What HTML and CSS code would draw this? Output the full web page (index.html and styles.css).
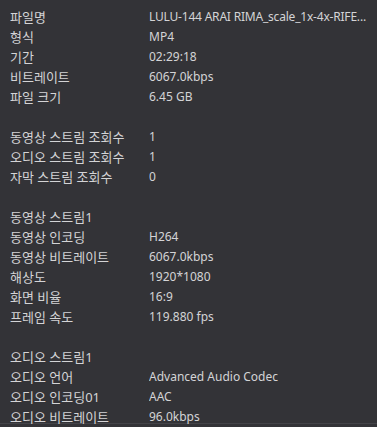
FILE: index.html
```html
<!DOCTYPE html>
<html lang="ko">
<head>
<meta charset="utf-8">
<link rel="stylesheet" href="styles.css">
</head>
<body>
<div class="panel">
  <dl class="info">
    <div class="row"><dt>파일명</dt><dd class="long">LULU-144 ARAI RIMA_scale_1x-4x-RIFE...</dd></div>
    <div class="row"><dt>형식</dt><dd>MP4</dd></div>
    <div class="row"><dt>기간</dt><dd>02:29:18</dd></div>
    <div class="row"><dt>비트레이트</dt><dd>6067.0kbps</dd></div>
    <div class="row"><dt>파일 크기</dt><dd>6.45 GB</dd></div>
    <div class="gap"></div>
    <div class="row"><dt>동영상 스트림 조회수</dt><dd>1</dd></div>
    <div class="row"><dt>오디오 스트림 조회수</dt><dd>1</dd></div>
    <div class="row"><dt>자막 스트림 조회수</dt><dd>0</dd></div>
    <div class="gap"></div>
    <div class="row"><dt>동영상 스트림1</dt><dd></dd></div>
    <div class="row"><dt>동영상 인코딩</dt><dd>H264</dd></div>
    <div class="row"><dt>동영상 비트레이트</dt><dd>6067.0kbps</dd></div>
    <div class="row"><dt>해상도</dt><dd>1920*1080</dd></div>
    <div class="row"><dt>화면 비율</dt><dd>16:9</dd></div>
    <div class="row"><dt>프레임 속도</dt><dd>119.880 fps</dd></div>
    <div class="gap"></div>
    <div class="row"><dt>오디오 스트림1</dt><dd></dd></div>
    <div class="row"><dt>오디오 언어</dt><dd>Advanced Audio Codec</dd></div>
    <div class="row"><dt>오디오 인코딩01</dt><dd>AAC</dd></div>
    <div class="row"><dt>오디오 비트레이트</dt><dd>96.0kbps</dd></div>
  </dl>
</div>
</body>
</html>
```
FILE: styles.css
```css
html, body {
  margin: 0;
  padding: 0;
  background: #333337;
}
body {
  width: 377px;
  height: 427px;
  overflow: hidden;
}
.panel {
  height: 424px;
  border-bottom: 1px solid #434348;
  box-sizing: border-box;
  padding: 7px 4px 0 10px;
  font-family: "Noto Sans", "Noto Sans CJK KR", sans-serif;
  color: #d4d4d6;
}
.info {
  margin: 0;
  display: flex;
  flex-direction: column;
}
.row {
  display: grid;
  grid-template-columns: 139px minmax(0, 1fr);
  height: 20px;
  line-height: 20px;
}
.gap {
  height: 20px;
}
dt, dd {
  margin: 0;
  white-space: nowrap;
  overflow: hidden;
}
dt {
  font-size: 13px;
}
dd {
  font-size: 12px;
}
dd.long {
  letter-spacing: -0.2px;
}
```
